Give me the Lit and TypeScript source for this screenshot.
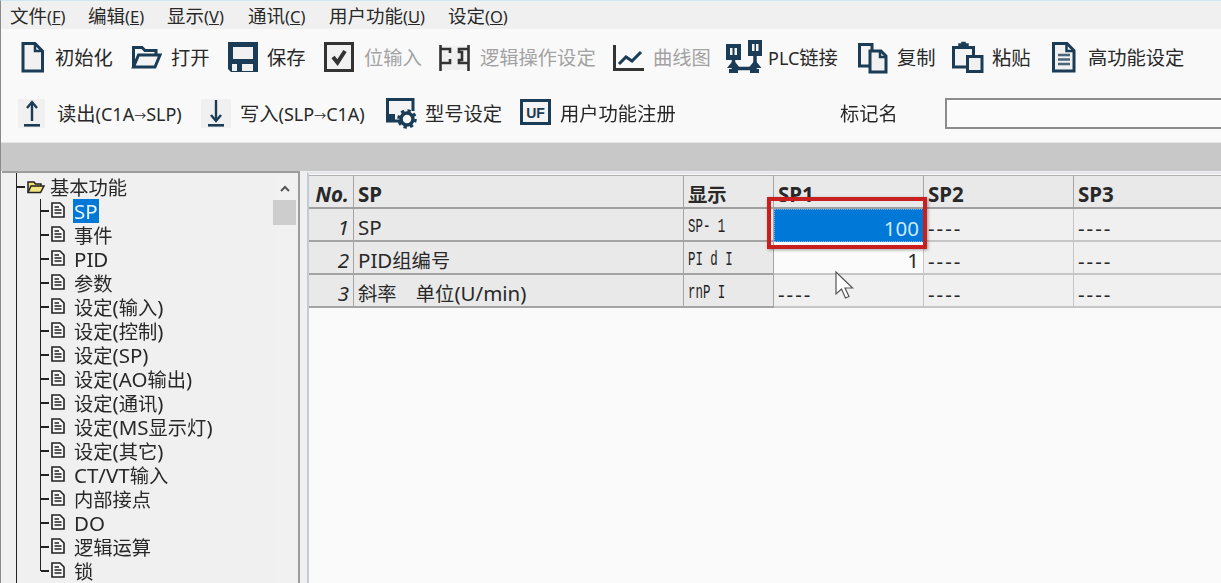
import { LitElement, css, html, svg } from 'lit';
import { customElement } from 'lit/decorators.js';

const NAVY = '#1b3c56';
const DARK = '#333333';

const icons = {
  doc: svg`<path d="M2 2.5H14L21.5 10V30H2Z" fill="#f1f1f1" stroke=${NAVY} stroke-width="3"/><path d="M14 2.5V10H21.5" fill="none" stroke=${NAVY} stroke-width="2.5"/>`,
  folder: svg`<path d="M1.5 26V6.5H10L13 9.5H24V13" fill="none" stroke=${NAVY} stroke-width="3"/><path d="M1.5 26L6.5 14H28L23 26Z" fill="#f4f4f4" stroke=${NAVY} stroke-width="3"/>`,
  save: svg`<path d="M0 1H30V31H3L0 28Z" fill=${NAVY}/><rect x="5" y="6" width="20" height="12" fill="#f1f1f1"/><rect x="4" y="23" width="5" height="7" fill="#f1f1f1"/><rect x="14" y="23" width="11" height="7" fill="#f1f1f1"/>`,
  check: svg`<rect x="1.5" y="2.5" width="27" height="27" fill="#f1f1f1" stroke=${DARK} stroke-width="3"/><path d="M9 16L13.5 21.5L21 10" fill="none" stroke=${DARK} stroke-width="4"/>`,
  logic: svg`<rect x="0" y="5" width="30" height="24" fill="#f0f0f0"/><path d="M1.5 4V30M1.5 8H11V12M1.5 22H11V18M29.5 4V30M29.5 8H20V11H23V19H20V22H29.5" fill="none" stroke=${DARK} stroke-width="2.6"/>`,
  chart: svg`<path d="M1.5 4V28.5H31" fill="none" stroke=${DARK} stroke-width="3"/><path d="M6 23L13 16L19 20L28 11" fill="none" stroke=${NAVY} stroke-width="3"/>`,
  plc: svg`<rect x="0" y="3" width="15" height="16" fill=${NAVY}/><rect x="22" y="-1" width="14" height="16" fill=${NAVY}/><path d="M4 7H6.5V14H4ZM8.5 7H11V14H8.5ZM26 3H28.5V10H26ZM30 3H32.5V10H30Z" fill="#f4f4f4"/><path d="M7.5 19V27.5H29V15" fill="none" stroke=${NAVY} stroke-width="3.5"/><path d="M1 27L7.5 19L14 27ZM22.5 27L29 19L35.5 27Z" fill=${NAVY}/><rect x="3" y="28" width="9" height="4" fill=${NAVY}/><rect x="24" y="28" width="9" height="4" fill=${NAVY}/>`,
  copy: svg`<path d="M11 25H1.5V3.5H14V9" fill="#f4f4f4" stroke=${NAVY} stroke-width="3"/><path d="M12 10H23L28 15V31H12Z" fill="#f1f1f1" stroke=${NAVY} stroke-width="3"/><path d="M22 10V16H28" fill="none" stroke=${NAVY} stroke-width="2.5"/>`,
  paste: svg`<path d="M14 26H1.5V6.5H21.5V15" fill="#f4f4f4" stroke=${NAVY} stroke-width="3"/><path d="M7 7H16V3H13V1.5H10V3H7Z" fill=${NAVY} stroke=${NAVY} stroke-width="1.5"/><rect x="15.5" y="15.5" width="14.5" height="15" fill="#f1f1f1" stroke=${NAVY} stroke-width="3"/>`,
  spec: svg`<path d="M1.5 2.5H15L22 9.5V30H1.5Z" fill="#f1f1f1" stroke=${NAVY} stroke-width="3"/><path d="M14.5 2.5V10H22" fill="none" stroke=${NAVY} stroke-width="2.5"/><path d="M6 14H18M6 18.5H18M6 23H18" stroke="#4a6478" stroke-width="2.5"/>`,
  up: svg`<rect x="0" y="2" width="27" height="29" fill="#f0f0f0"/><path d="M14 5V24" stroke=${NAVY} stroke-width="2.4"/><path d="M9 11L14 5L19 11" fill="none" stroke=${NAVY} stroke-width="2.4"/><rect x="6" y="27" width="16" height="2.6" fill=${NAVY}/>`,
  down: svg`<rect x="0" y="2" width="30" height="29" fill="#f0f0f0"/><path d="M15 3V23" stroke=${NAVY} stroke-width="2.4"/><path d="M10 18L15 24L20 18" fill="none" stroke=${NAVY} stroke-width="2.4"/><rect x="7" y="27" width="16" height="2.6" fill=${NAVY}/>`,
  model: svg`<path d="M17 24H1.5V2.5H27V14" fill="#f4f4f4" stroke=${NAVY} stroke-width="3"/><rect x="1" y="17" width="8" height="8" fill=${NAVY}/><circle cx="21" cy="22" r="6" fill="none" stroke=${NAVY} stroke-width="3.5"/><circle cx="21" cy="22" r="8.5" fill="none" stroke=${NAVY} stroke-width="2.6" stroke-dasharray="3.4 3.3"/>`,
  uf: svg`<rect x="1.5" y="3.5" width="28" height="23" fill="#f4f4f4" stroke=${NAVY} stroke-width="3"/><text x="15.5" y="20.5" text-anchor="middle" font-family="'Liberation Sans',sans-serif" font-weight="700" font-size="14" fill=${NAVY}>UF</text>`,
};

type IconName = keyof typeof icons;
type Tool = { icon: IconName; w: number; label: string; off?: boolean };

const row1: Tool[] = [
  { icon: 'doc', w: 34, label: '初始化' },
  { icon: 'folder', w: 39, label: '打开' },
  { icon: 'save', w: 39, label: '保存' },
  { icon: 'check', w: 40, label: '位输入', off: true },
  { icon: 'logic', w: 41, label: '逻辑操作设定', off: true },
  { icon: 'chart', w: 40, label: '曲线图', off: true },
  { icon: 'plc', w: 42, label: 'PLC链接' },
  { icon: 'copy', w: 39, label: '复制' },
  { icon: 'paste', w: 40, label: '粘贴' },
  { icon: 'spec', w: 36, label: '高功能设定' },
];

const row2: Tool[] = [
  { icon: 'up', w: 39, label: '读出(C1A→SLP)' },
  { icon: 'down', w: 39, label: '写入(SLP→C1A)' },
  { icon: 'model', w: 39, label: '型号设定' },
  { icon: 'uf', w: 40, label: '用户功能注册' },
];

const menus: [string, string, string, string][] = [
  ['文件', '(', 'F', ')'],
  ['编辑', '(', 'E', ')'],
  ['显示', '(', 'V', ')'],
  ['通讯', '(', 'C', ')'],
  ['用户功能', '(', 'U', ')'],
  ['设定', '(', 'O', ')'],
];

const treeItems = [
  'SP', '事件', 'PID', '参数', '设定(输入)', '设定(控制)', '设定(SP)', '设定(AO输出)',
  '设定(通讯)', '设定(MS显示灯)', '设定(其它)', 'CT/VT输入', '内部接点', 'DO', '逻辑运算', '锁',
];

const rows = [
  { no: '1', name: 'SP', seg: 'SP- 1', vals: ['100', '----', '----'] },
  { no: '2', name: 'PID组编号', seg: 'PI d I', vals: ['1', '----', '----'] },
  { no: '3', name: '斜率　 单位(U/min)', seg: 'rnP I', vals: ['----', '----', '----'] },
];

// CJK glyphs sit larger than the latin ones in the original, so size the runs apart
function runs(text: string) {
  const parts = text.match(/[\u3000-\u9fff]+|→|[^\u3000-\u9fff→]+/g) ?? [];
  return parts.map((p) => {
    if (p === '→') return html`<span class="arrow">${p}</span>`;
    return /[\u3000-\u9fff]/.test(p) ? html`<span class="cjk">${p}</span>` : p;
  });
}

@customElement('app-root')
export class AppRoot extends LitElement {
  static override styles = css`
    :host {
      display: block;
      width: 1221px;
      height: 583px;
      overflow: hidden;
      background: #f0f0f0;
    }
    .window {
      position: relative;
      height: 583px;
      display: flex;
      flex-direction: column;
      box-sizing: border-box;
      border-top: 1px solid #cfe6f7;
      border-left: 1px solid #8a8a8a;
      font-family: 'Noto Sans', 'Noto Sans CJK SC', sans-serif;
      font-size: 18px;
      color: #282828;
      filter: blur(0.35px);
      overflow: hidden;
    }
    .cjk {
      font-size: 19.3px;
    }
    .arrow {
      font-size: 12px;
    }
    .menu {
      height: 28px;
      flex: none;
      display: grid;
      grid-template-columns: 78px 79px 81px 81px 119px auto;
      align-items: center;
      justify-content: start;
      padding-left: 9px;
      font-size: 16.5px;
      background: #f0f0f0;
    }
    .menu .cjk {
      font-size: 18.5px;
    }
    .toolbar {
      flex: none;
      height: 114px;
      background: #f9f9f9;
      border-bottom: 1px solid #e4e4e4;
      box-sizing: border-box;
    }
    .tools {
      height: 56px;
      display: grid;
      align-items: center;
      white-space: nowrap;
    }
    .tools.first {
      grid-template-columns: 111px 96px 96px 115px 174px 113px 132px 94px 100px 169px;
      padding-left: 20px;
    }
    .tools.second {
      grid-template-columns: 183px 185px 134px 320px 105px 1fr;
      padding-left: 17px;
    }
    .tool {
      display: flex;
      align-items: center;
      font-size: 18px;
    }
    .tool.off {
      color: #a2a2a2;
    }
    .tool svg {
      flex: none;
      overflow: visible;
    }
    .tag-input {
      height: 31px;
      box-sizing: border-box;
      border: 2px solid #8c8c8c;
      border-right: none;
      background: #fbfbfb;
    }
    .band {
      flex: none;
      height: 28px;
      background: #c8c8c8;
    }
    .main {
      flex: 1;
      min-height: 0;
      display: flex;
      font-size: 20.5px;
    }
    .tree {
      width: 298px;
      margin-left: 1px;
      box-sizing: border-box;
      flex: none;
      display: flex;
      background: #f0f0f0;
      border-top: 2px solid #9c9c9c;
      border-right: 2px solid #9c9c9c;
    }
    .tree-body {
      flex: 1;
      padding-left: 14px;
    }
    .trunk {
      border-left: 1.5px solid #222;
      height: 100%;
      box-sizing: border-box;
      padding-top: 2px;
    }
    .root {
      height: 24px;
      display: flex;
      align-items: center;
      white-space: nowrap;
    }
    .root .hline {
      width: 8px;
      height: 1.5px;
      background: #222;
      margin-right: 2px;
    }
    .root > span {
      margin-left: 5px;
    }
    .branch {
      margin-left: 23px;
      width: fit-content;
    }
    .leaf {
      height: 24px;
      display: flex;
      align-items: center;
      white-space: nowrap;
      border-left: 1.5px solid #222;
    }
    .leaf:last-child {
      border-left-color: transparent;
      position: relative;
    }
    .leaf:last-child::before {
      content: '';
      position: absolute;
      left: -1.5px;
      top: 0;
      height: 12px;
      border-left: 1.5px solid #222;
    }
    .leaf .hline {
      width: 8px;
      height: 1.5px;
      background: #222;
      margin-right: 2px;
    }
    .leaf svg {
      flex: none;
      margin-right: 8px;
      margin-top: -3px;
    }
    .leaf > span {
      padding: 0 1px;
      line-height: 24px;
      height: 24px;
    }
    .leaf > span.sel {
      background: #0078d7;
      color: #e8f4ff;
    }
    .scroll {
      width: 23px;
      margin-right: 2px;
      flex: none;
      background: #f1f1f1;
      display: flex;
      flex-direction: column;
      align-items: center;
    }
    .scroll svg {
      margin-top: 11px;
      height: 10px;
    }
    .thumb {
      margin-top: 6px;
      width: 100%;
      height: 25px;
      background: #cdcdcd;
    }
    .grid-wrap {
      flex: 1;
      margin-left: 7px;
      margin-top: 1px;
      background: #fafafa;
      border-left: 2px solid #c3cbd8;
      border-top: 2px solid #e4e6ea;
      padding-top: 1px;
    }
    .grid {
      display: grid;
      grid-template-columns: 45px 330px 90px 150px 150px 150px;
      grid-template-rows: 34px;
      grid-auto-rows: 33px;
    }
    .cell {
      display: flex;
      align-items: center;
      box-sizing: border-box;
      padding: 4px 4px 0;
      white-space: nowrap;
      background: #f0f0f0;
      border-right: 1.5px solid #c6c6c6;
      border-bottom: 2px solid #c6c6c6;
    }
    .cell.fixed {
      background: #e9e9e9;
      border-right-color: #a4a4a4;
      border-bottom-color: #a4a4a4;
    }
    .cell.head {
      background: #e9e9e9;
      font-weight: 700;
      border-right-color: #a4a4a4;
      border-bottom-color: #a0a0a0;
      border-top: 1.5px solid #b0b0b0;
      padding-top: 5px;
    }
    .cell.no {
      justify-content: flex-end;
      font-style: italic;
    }
    .cell.seg {
      font-family: 'Liberation Mono', monospace;
      font-size: 20px;
      color: #222;
    }
    .cell.seg span {
      transform: scaleX(0.62);
      transform-origin: left center;
    }
    .cell.num {
      justify-content: flex-end;
    }
    .cell.dash {
      letter-spacing: 2px;
      padding-top: 6px;
    }
    .cell.num-white {
      background: #fbfbfb;
    }
    .cell.picked {
      background: #0078d7;
      color: #cfe8ff;
      border: 1px dotted #7fb5e6;
    }
    .callout {
      position: absolute;
      left: 766px;
      top: 196px;
      width: 160px;
      height: 52px;
      box-sizing: border-box;
      border: 4px solid #c8201f;
      box-shadow: 1px 1px 3px rgba(0, 0, 0, 0.35);
    }
    .cursor {
      position: absolute;
      left: 834px;
      top: 270px;
    }
  `;

  private renderTool(t: Tool) {
    return html`<div class="tool ${t.off ? 'off' : ''}">
      <svg width=${t.w} height="32" viewBox="0 0 ${t.w} 32">${icons[t.icon]}</svg>
      <span>${runs(t.label)}</span>
    </div>`;
  }

  private renderLeafIcon() {
    return html`<svg width="14" height="16" viewBox="0 0 14 16">
      <path d="M1 1H9L13 5V15H1Z" fill="#f6f6f6" stroke="#222" stroke-width="1.6" />
      <path d="M3.5 5H8M3.5 8H10.5M3.5 11H10.5" stroke="#222" stroke-width="1.3" />
    </svg>`;
  }

  override render() {
    return html`<div class="window">
      <div class="menu">
        ${menus.map(([a, o, k, c]) => html`<div><span class="cjk">${a}</span>${o}<u>${k}</u>${c}</div>`)}
      </div>
      <div class="toolbar">
        <div class="tools first">${row1.map((t) => this.renderTool(t))}</div>
        <div class="tools second">
          ${row2.map((t) => this.renderTool(t))}
          <div class="tool">${runs('标记名')}</div>
          <div class="tag-input"></div>
        </div>
      </div>
      <div class="band"></div>
      <div class="main">
        <div class="tree">
          <div class="tree-body">
            <div class="trunk">
              <div class="root">
                <div class="hline"></div>
                <svg width="18" height="14" viewBox="0 0 18 14">
                  <path d="M1 12V2H7L8.5 4H14V6" fill="#efe27a" stroke="#222" stroke-width="1.5" />
                  <path d="M1 12.5L4 6H17L13.5 12.5Z" fill="#f2e680" stroke="#222" stroke-width="1.5" />
                </svg>
                <span>${runs('基本功能')}</span>
              </div>
              <div class="branch">
                ${treeItems.map(
                  (name, i) => html`<div class="leaf">
                    <div class="hline"></div>
                    ${this.renderLeafIcon()}
                    <span class=${i === 0 ? 'sel' : ''}>${runs(name)}</span>
                  </div>`,
                )}
              </div>
            </div>
          </div>
          <div class="scroll">
            <svg width="12" height="10" viewBox="0 0 12 10">
              <path d="M2 7L6 3L10 7" fill="none" stroke="#555" stroke-width="2" />
            </svg>
            <div class="thumb"></div>
          </div>
        </div>
        <div class="grid-wrap">
          <div class="grid">
            <div class="cell head no">No.</div>
            <div class="cell head">SP</div>
            <div class="cell head">${runs('显示')}</div>
            <div class="cell head">SP1</div>
            <div class="cell head">SP2</div>
            <div class="cell head">SP3</div>
            ${rows.map(
              (r, ri) => html`
                <div class="cell fixed no">${r.no}</div>
                <div class="cell fixed">${runs(r.name)}</div>
                <div class="cell fixed seg"><span>${r.seg}</span></div>
                ${r.vals.map((v, i) => {
                  const isNum = v !== '----';
                  const cls = [
                    'cell',
                    isNum ? 'num' : 'dash',
                    ri === 0 && i === 0 ? 'picked' : '',
                    ri === 1 && i === 0 ? 'num-white' : '',
                  ].join(' ');
                  return html`<div class=${cls}>${v}</div>`;
                })}
              `,
            )}
          </div>
        </div>
      </div>
      <div class="callout"></div>
      <svg class="cursor" width="20" height="30" viewBox="0 0 20 30">
        <path d="M1 1V23L6.5 18L10.5 27L14 25.5L10 17H17.5Z" fill="#fff" stroke="#555" stroke-width="1.2" />
      </svg>
    </div>`;
  }
}

declare global {
  interface HTMLElementTagNameMap {
    'app-root': AppRoot;
  }
}
